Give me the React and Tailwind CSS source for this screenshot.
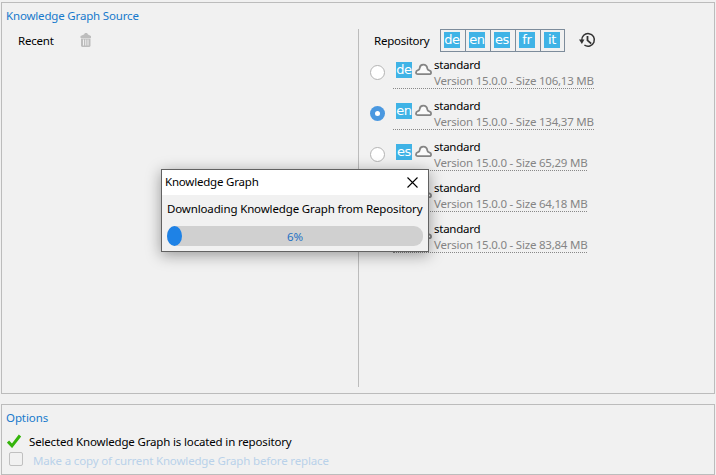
const LANGS = ["de", "en", "es", "fr", "it"];

const ROWS = [
  { lang: "de", size: "106,13 MB" },
  { lang: "en", size: "134,37 MB", selected: true },
  { lang: "es", size: "65,29 MB" },
  { lang: "fr", size: "64,18 MB" },
  { lang: "it", size: "83,84 MB" },
];

function Lang({ code }) {
  return (
    <span className="flex h-4 w-4 shrink-0 justify-center overflow-hidden bg-[#3fb3e6] font-['DejaVu_Sans',sans-serif] text-[13px] leading-[16px] tracking-[-0.3px] text-white">
      {code}
    </span>
  );
}

function Cloud() {
  return (
    <svg className="mt-px ml-[3px] h-[13px] w-[17px] shrink-0" viewBox="0 0 17 13" fill="#fafafa" stroke="#858585" strokeWidth="1.800">
      <path d="M2.800 11.200h11.400c2.400 0 2.600-3.400-.1-3.900-1.300-.2-1.700-.6-1.800-1.900C12 3 10.400 1.600 8.300 1.600c-2.100 0-3.400 1.500-3.600 3.400 0 1.400-.5 1.900-1.700 2.200-2.700.7-2.600 4-.2 4z" />
    </svg>
  );
}

function Trash() {
  return (
    <svg className="ml-[26px] mt-[4px] h-[15px] w-[12px]" viewBox="0 0 12 15" fill="#bdbdbd">
      <path d="M4 1.500L5 0h2l1 1.500L11 3v2H.5V3zM1 5.500h9.500V13l-1 1H2l-1-1z" />
      <path d="M3.500 6.500v6M5.750 6.500v6M8 6.500v6" stroke="#f1f1f1" strokeWidth="1" />
    </svg>
  );
}

function History() {
  return (
    <svg className="ml-[14px] mt-[3px] h-[16px] w-[17px]" viewBox="0 0 17 16" fill="none" stroke="#333" strokeWidth="1.500">
      <path d="M2.800 8.500A6.300 6.300 0 1 1 5.400 13" />
      <path d="M8.500 4v4.300l3.700 3.400" strokeWidth="1.800" />
      <path d="M0 7.500h5.400L2.900 12z" fill="#333" stroke="none" />
    </svg>
  );
}

function Row({ lang, size, selected }) {
  return (
    <div className="flex h-[41px]">
      <span
        className={
          selected
            ? "mt-[8px] flex h-[15px] w-[15px] items-center justify-center rounded-full bg-[#4a98e0]"
            : "mt-[8px] flex h-[15px] w-[15px] rounded-full border border-[#b3b3b3] bg-white"
        }
      >
        {selected && <span className="h-[5px] w-[5px] rounded-full bg-white" />}
      </span>
      <div className="ml-2 flex h-[32px] border-b border-dotted border-[#888] pl-[3px]">
        <span className="flex pt-[5px]">
          <Lang code={lang} />
          <Cloud />
        </span>
        <span className="ml-[2px] block whitespace-nowrap">
          <span className="block h-[16px] leading-[16px] tracking-[-0.25px]">standard</span>
          <span className="block h-[15px] leading-[16px] tracking-[-0.22px] text-[#858585]">Version 15.0.0 - Size {size}</span>
        </span>
      </div>
    </div>
  );
}

export default function App() {
  return (
    <div className="relative h-[475px] w-[716px] overflow-hidden bg-[#f1f1f1] pt-[2px] pl-px font-['Noto_Sans',sans-serif] text-[11.5px] whitespace-nowrap text-black">
      <section className="h-[392px] w-[714px] border border-[#bcbcbc]">
        <h2 className="h-[26px] pl-1 leading-[26px] tracking-[-0.17px] text-[#1779cc]">Knowledge Graph Source</h2>
        <div className="flex h-[358px]">
          <div className="flex w-[357px] border-r border-[#bcbcbc] pl-4">
            <span className="h-[24px] leading-[24px] tracking-[-0.2px]">Recent</span>
            <Trash />
          </div>
          <div className="pl-[11px]">
            <div className="flex h-[28px] pl-[4px]">
              <span className="w-[66px] leading-[24px] tracking-[-0.25px]">Repository</span>
              <div className="flex h-[23px] border border-[#7d8c9b]">
                {LANGS.map((l) => (
                  <span key={l} className="flex w-[25px] border-r border-[#7d8c9b] pt-[2px] pl-[3px] last:w-[23px] last:border-r-0">
                    <Lang code={l} />
                  </span>
                ))}
              </div>
              <History />
            </div>
            {ROWS.map((r) => (
              <Row key={r.lang} {...r} />
            ))}
          </div>
        </div>
      </section>

      <section className="mt-[10px] h-[71px] w-[714px] border border-[#bcbcbc]">
        <h2 className="h-[26px] pl-1 leading-[26px] tracking-[-0.1px] text-[#1779cc]">Options</h2>
        <div className="flex h-[20px] pl-[5px]">
          <svg className="mt-[3px] h-[14px] w-[15px]" viewBox="0 0 15 14" fill="none" stroke="#35b50c" strokeWidth="3">
            <path d="M1 7.500l4 4.300L13 1.500" />
          </svg>
          <span className="ml-[7px] leading-[22px] tracking-[-0.16px]">Selected Knowledge Graph is located in repository</span>
        </div>
        <div className="flex h-[18px] pl-[7px]">
          <span className="mt-[1px] h-[14px] w-[14px] rounded-[2px] border border-[#c0c0c0]" />
          <span className="ml-[10px] leading-[19px] tracking-[-0.16px] text-[#b9d1ea]">Make a copy of current Knowledge Graph before replace</span>
        </div>
      </section>

      <div className="absolute top-[169px] left-[161px] h-[83px] w-[268px] border border-[#626262] bg-[#f1f1f1] shadow-[0_3px_14px_rgba(0,0,0,0.38)]">
        <div className="flex h-[25px] justify-between bg-white pr-[10px] pl-[3px]">
          <span className="leading-[24px] tracking-[-0.2px]">Knowledge Graph</span>
          <svg className="mt-[7px] h-[11px] w-[11px]" viewBox="0 0 11 11" stroke="#000" strokeWidth="1.100">
            <path d="M.5.5l10 10M10.500.5l-10 10" />
          </svg>
        </div>
        <div className="px-[5px]">
          <p className="h-[31px] leading-[28px] tracking-[-0.14px]">Downloading Knowledge Graph from Repository</p>
          <div className="relative h-[20px] rounded-[9px] bg-[#d0d0d0] text-center leading-[21px] tracking-[-0.1px] text-[#1f70c4]">
            <span className="absolute top-0 left-0 h-[20px] w-[15px] rounded-[50%] bg-[#1e82e6]" />
            6%
          </div>
        </div>
      </div>
    </div>
  );
}
